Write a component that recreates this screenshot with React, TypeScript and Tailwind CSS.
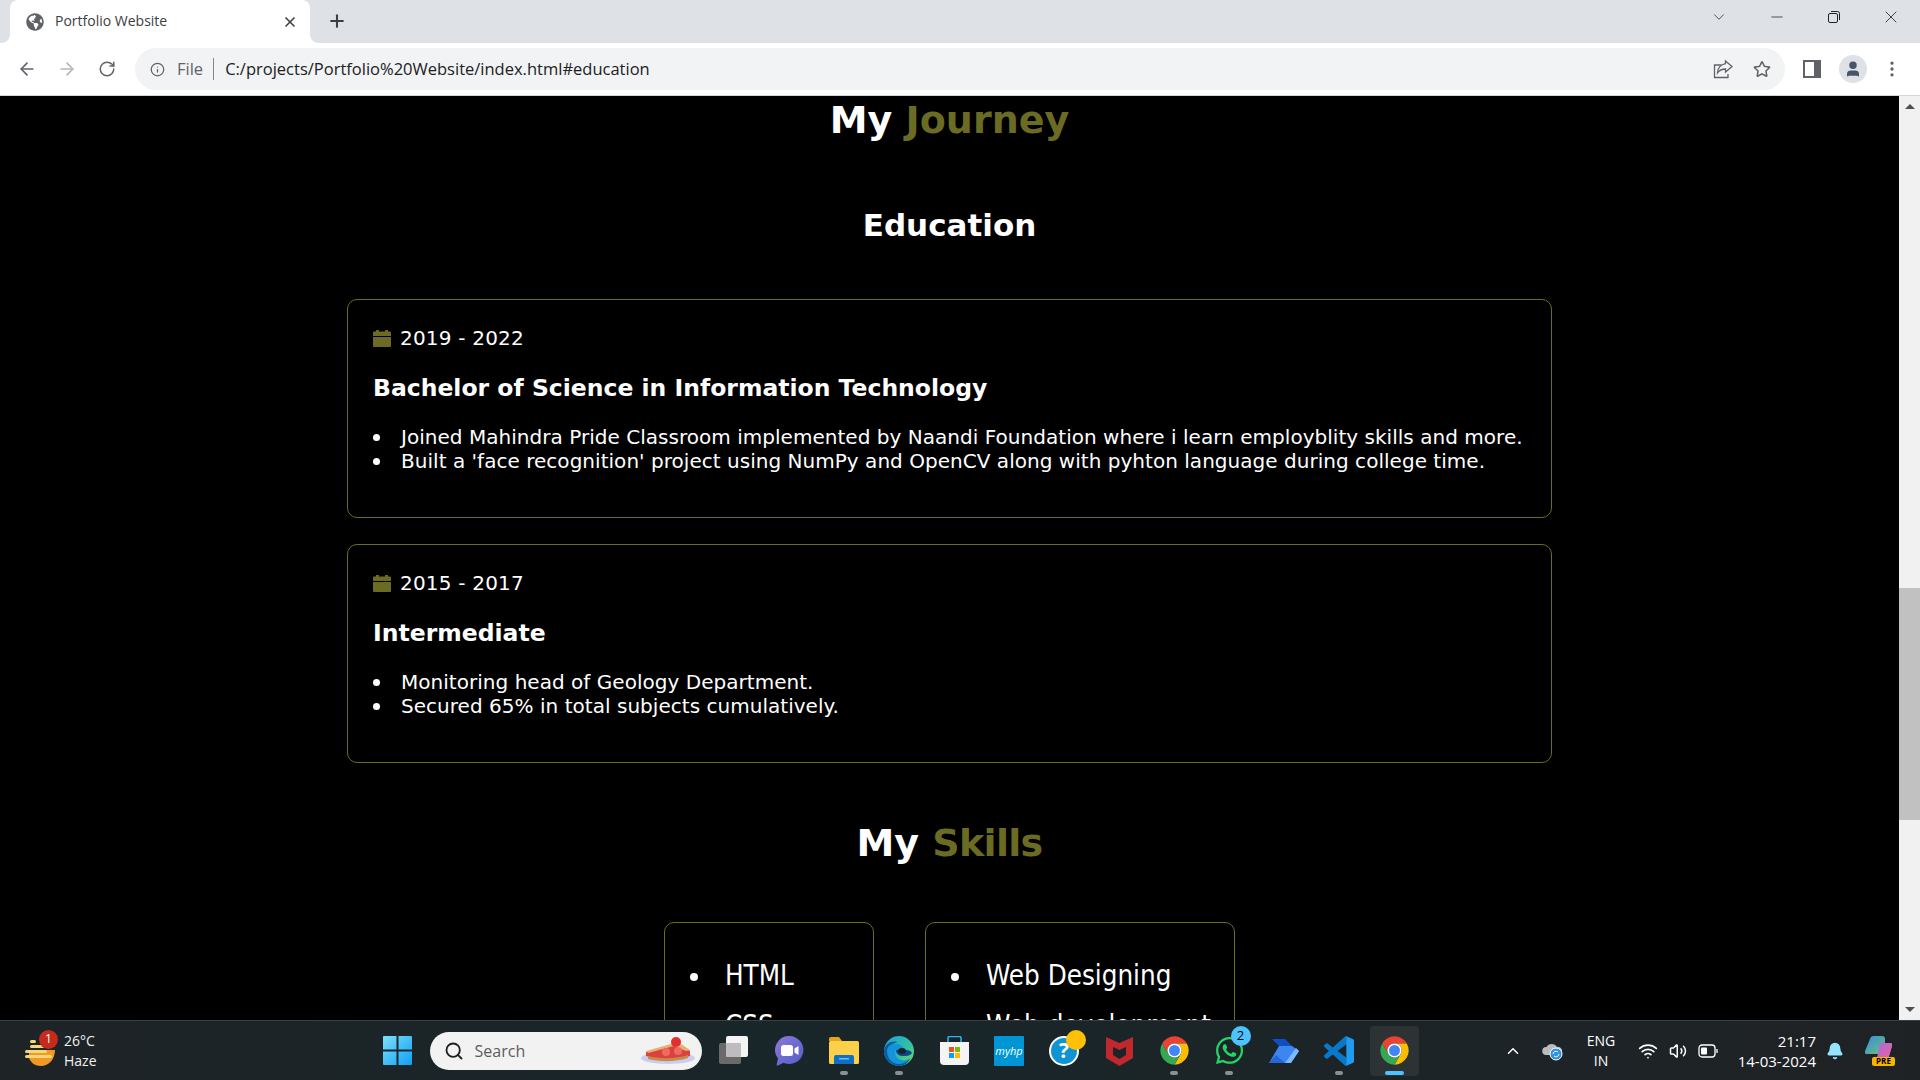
import { ReactNode } from 'react'
import { FaGlobeAmericas, FaWhatsapp, FaRegStar } from 'react-icons/fa'
import { Info, Search, ArrowLeft, ArrowRight, RotateCw, X, Plus, ChevronDown, ChevronUp, Minus, Wifi, Volume2, Bell, EllipsisVertical, User } from 'lucide-react'

const education = [
  {
    years: '2019 - 2022',
    title: 'Bachelor of Science in Information Technology',
    points: [
      'Joined Mahindra Pride Classroom implemented by Naandi Foundation where i learn employblity skills and more.',
      "Built a 'face recognition' project using NumPy and OpenCV along with pyhton language during college time.",
    ],
  },
  {
    years: '2015 - 2017',
    title: 'Intermediate',
    points: ['Monitoring head of Geology Department.', 'Secured 65% in total subjects cumulatively.'],
  },
]

function Chrome() {
  const fin = 'M4.950 13A22 22 0 0 1 43.050 13H24A11 11 0 0 0 14.470 29.500Z'
  return (
    <svg width="31" height="31" viewBox="0 0 48 48">
      <path d={fin} fill="#ea4335" />
      <path d={fin} fill="#fbbc04" transform="rotate(120 24 24)" />
      <path d={fin} fill="#34a853" transform="rotate(240 24 24)" />
      <circle cx="24" cy="24" r="11" fill="#fff" />
      <circle cx="24" cy="24" r="8.500" fill="#4285f4" />
    </svg>
  )
}

function TaskView() {
  return (
    <svg width="30" height="29" viewBox="0 0 30 29">
      <rect x="0" y="7" width="22" height="21" rx="2" fill="#6a6a6a" />
      <rect x="7" y="0" width="22" height="21" rx="2" fill="#f4f4f4" />
      <rect x="7" y="7" width="15" height="14" rx="1" fill="#bdbdbd" />
    </svg>
  )
}

function ChatIcon() {
  return (
    <svg width="29" height="30" viewBox="0 0 29 30">
      <defs>
        <linearGradient id="chat" x1="0" y1="0" x2="1" y2="1">
          <stop offset="0" stopColor="#8f78d8" />
          <stop offset="1" stopColor="#4f5fc8" />
        </linearGradient>
      </defs>
      <path d="M14.500 0a14 14 0 1 1-6 26.700L3 29.500c-1 .3-1.500-.3-1.300-1.200L3 22.500A14 14 0 0 1 14.500 0z" fill="url(#chat)" />
      <rect x="6" y="9" width="12" height="11" rx="2.500" fill="#fff" />
      <path d="M19.500 12.500l4-2.500v9l-4-2.500z" fill="#fff" />
    </svg>
  )
}

function FolderIcon() {
  return (
    <svg width="30" height="27" viewBox="0 0 30 27">
      <path d="M0 2a2 2 0 0 1 2-2h8l3 4h-13z" fill="#e3a51a" />
      <rect x="0" y="4" width="30" height="23" rx="1.500" fill="#fdd04a" />
      <path d="M5 20a2 2 0 0 1 2-2h16a2 2 0 0 1 2 2v7H5z" fill="#0f6fc6" />
      <rect x="10" y="21" width="10" height="1.500" fill="#6bbdf0" />
    </svg>
  )
}

function EdgeIcon() {
  return (
    <svg width="30" height="30" viewBox="0 0 30 30">
      <defs>
        <linearGradient id="edgeTop" x1="0" y1="0" x2="1" y2="1">
          <stop offset="0" stopColor="#1aa2d8" />
          <stop offset="0.6" stopColor="#35c1a0" />
          <stop offset="1" stopColor="#7fdc5c" />
        </linearGradient>
      </defs>
      <circle cx="15" cy="15" r="15" fill="url(#edgeTop)" />
      <path d="M0 15C1 7 8 4 14 6c-6 1-9 5-8 11 1 7 8 11 15 9 2-.5 4-2 6-4-3 5-7 8-12 8C7 30 0 23 0 15z" fill="#0c59a4" />
      <path d="M3 15C3 10 8 7 13 8c4 .8 7 3 7 6H12c-2 4 0 8 5 10 3 1 6 0 9-2-3 4-7 6-11 6C8 28 3 22 3 15z" fill="#1493d8" />
      <path d="M12 14h10c3 0 5 1 6 3-2 3-6 3-9 3-4 0-7-2-7-6z" fill="#0a4a8a" />
      <ellipse cx="18" cy="15" rx="4" ry="3" fill="#1c2326" />
    </svg>
  )
}

function StoreIcon() {
  return (
    <svg width="29" height="29" viewBox="0 0 29 29">
      <path d="M8 6V2a1.500 1.500 0 0 1 1.500-1.500h10A1.500 1.500 0 0 1 21 2v4" fill="none" stroke="#29b6f0" strokeWidth="1.500" />
      <path d="M0 6h29v19a4 4 0 0 1-4 4H4a4 4 0 0 1-4-4z" fill="#f4f4f4" />
      <rect x="9" y="11" width="5" height="5" fill="#f25022" />
      <rect x="15" y="11" width="5" height="5" fill="#7fba00" />
      <rect x="9" y="17" width="5" height="5" fill="#00a4ef" />
      <rect x="15" y="17" width="5" height="5" fill="#ffb900" />
    </svg>
  )
}

function HelpIcon() {
  return (
    <div className="relative h-[30px] w-[30px]">
      <div className="flex h-[30px] w-[30px] items-center justify-center rounded-full border-[2px] border-white bg-[#0f94d2] text-[21px] font-bold text-white">?</div>
      <div className="absolute right-[-7px] top-[-6px] h-[20px] w-[20px] rounded-full bg-[#ffc107]" />
    </div>
  )
}

function McAfeeIcon() {
  return (
    <svg width="27" height="31" viewBox="0 0 27 31">
      <path fillRule="evenodd" d="M0 2L13.500 8 27 2V23L13.500 31 0 23ZM7 12L13.500 15 20 12V20L13.500 24 7 20Z" fill="#c0282d" />
    </svg>
  )
}

function AutomateIcon() {
  return (
    <svg width="30" height="24" viewBox="0 0 30 24">
      <path d="M3 0h13l7 7H10z" fill="#0f4fc4" />
      <path d="M10 7h13l7 5-8 12H0z" fill="#3d85f0" />
      <path d="M16 24h6l8-12-3-3z" fill="#7ab8ff" />
      <path d="M0 24l7-8 9 8z" fill="#2467d8" />
    </svg>
  )
}

function VsCodeIcon() {
  return (
    <svg width="30" height="30" viewBox="0 0 100 100">
      <path
        fillRule="evenodd"
        fill="#0a78c8"
        d="M96.500 10.800L75.900.900a6.200 6.200 0 0 0-7.100 1.200L29.400 38 12.200 25a4.200 4.200 0 0 0-5.300.200L1.400 30.200a4.200 4.200 0 0 0 0 6.200L16.300 50 1.400 63.600a4.200 4.200 0 0 0 0 6.200l5.500 5a4.200 4.200 0 0 0 5.300.200L29.400 62l39.400 35.900a6.200 6.200 0 0 0 7.100 1.200l20.600-9.900a6.200 6.200 0 0 0 3.500-5.600V16.400a6.200 6.200 0 0 0-3.500-5.600zM75 72.700L45.100 50 75 27.300z"
      />
      <path d="M72 1l24.500 9.800a6 6 0 0 1 3.500 5.600v67.200a6 6 0 0 1-3.500 5.600L72 99c2 0 3-1 3-3V4c0-2-1-3-3-3z" fill="#1f9cf0" />
    </svg>
  )
}

function Slot({ children, dot, active }: { children: ReactNode; dot?: boolean; active?: boolean }) {
  return (
    <div className="relative flex h-[50px] w-[55px] items-center justify-center">
      {active && <div className="absolute inset-y-0 left-[3px] w-[49px] rounded bg-[#2d3235]" />}
      <div className="relative flex items-center justify-center">{children}</div>
      {dot && <span className="absolute bottom-[1px] h-[4px] w-[8px] rounded-full bg-[#8c8f8f]" />}
      {active && <span className="absolute bottom-[1px] h-[4px] w-[19px] rounded-full bg-[#4cc2ff]" />}
    </div>
  )
}

function BrowserChrome() {
  return (
    <div className="shrink-0 font-['Open_Sans',sans-serif]">
      <div className="flex h-[43px] items-end bg-[#dee1e6]">
        <div className="relative ml-[10px] flex h-[43px] w-[300px] items-center rounded-t-lg bg-white pl-[16px] pr-[12px]">
          <div className="absolute bottom-0 left-[-8px] h-[8px] w-[8px] bg-[radial-gradient(circle_at_0_0,#dee1e6_7.500px,#ffffff_8px)]" />
          <div className="absolute bottom-0 right-[-8px] h-[8px] w-[8px] bg-[radial-gradient(circle_at_100%_0,#dee1e6_7.500px,#ffffff_8px)]" />
          <FaGlobeAmericas className="text-[18px] text-[#5f6368]" />
          <span className="mb-[2px] ml-[11px] text-[14px] text-[#3c4043]">Portfolio Website</span>
          <X className="ml-auto text-[#3c4043]" size={16} strokeWidth={2.5} />
        </div>
        <Plus className="mb-[12px] ml-[17px] text-[#3c4043]" size={20} strokeWidth={2.5} />
        <div className="mb-[16px] ml-auto flex items-center text-[#202124]">
          <ChevronDown size={18} strokeWidth={1} />
          <Minus className="ml-[40px]" size={18} strokeWidth={1} />
          <svg className="ml-[41px]" width="14" height="14" viewBox="0 0 14 14" fill="none" stroke="currentColor">
            <rect x="1.500" y="3.500" width="9" height="9" rx="1.500" />
            <path d="M4 1.500h6.500a2 2 0 0 1 2 2V10" />
          </svg>
          <X className="ml-[40px] mr-[19px]" size={20} strokeWidth={1} />
        </div>
      </div>
      <div className="flex h-[53px] items-center border-b border-[#d4d5d7] bg-white">
        <ArrowLeft className="ml-[17px] text-[#5f6368]" size={20} />
        <ArrowRight className="ml-[20px] text-[#b4b6b9]" size={20} />
        <RotateCw className="ml-[21px] text-[#5f6368]" size={18} />
        <div className="ml-[19px] flex h-[42px] w-[1650px] items-center rounded-full bg-[#f1f3f4] pl-[15px] pr-[14px]">
          <Info className="text-[#5f6368]" size={15} />
          <span className="ml-[12px] text-[16.500px] text-[#5f6368]">File</span>
          <span className="ml-[10px] h-[22px] w-px bg-[#80868b]" />
          <span className="ml-[11px] text-[16.500px] text-[#202124]">C:/projects/Portfolio%20Website/index.html#education</span>
          <svg className="ml-auto text-[#5f6368]" width="20" height="20" viewBox="0 0 20 20" fill="none" stroke="currentColor" strokeWidth="1.300">
            <path d="M8 6H1.500v12.500H15V15" />
            <path d="M12.500 2l6.500 5.500-6.500 5.500V10C9 10 6.500 11 4.500 14c.3-5 3.500-8.500 8-9.300z" />
          </svg>
          <FaRegStar className="ml-[20px] text-[18px] text-[#5f6368]" />
        </div>
        <div className="ml-[18px] h-[18px] w-[18px] border-[2px] border-r-[7px] border-[#5f6368] bg-white" />
        <div className="ml-[18px] flex h-[28px] w-[28px] items-center justify-center rounded-full bg-[#dee1e6] text-[#475569]">
          <User size={18} fill="currentColor" />
        </div>
        <EllipsisVertical className="ml-[15px] text-[#5f6368]" size={20} />
      </div>
    </div>
  )
}

function Taskbar() {
  return (
    <div className="relative flex h-[60px] shrink-0 items-center border-t border-[#3a3f41] bg-[linear-gradient(90deg,#1e2326,#18262a_45%,#1c2427_70%,#1f2225)] font-['Open_Sans',sans-serif] text-white">
      <div className="relative ml-[25px] h-[30px] w-[30px]">
        <svg width="30" height="30" viewBox="0 0 30 30">
          <path d="M4 14h26c0 9-6 16-14 16-6 0-10-3-12-8z" fill="#f09a24" />
          <rect x="5" y="4" width="6" height="3" rx="1.500" fill="#f5d67a" />
          <rect x="5" y="9" width="14" height="3" rx="1.500" fill="#f5d67a" />
          <rect x="0" y="14" width="22" height="3" rx="1.500" fill="#f5d67a" />
          <rect x="0" y="19" width="27" height="3" rx="1.500" fill="#f5d67a" />
        </svg>
        <div className="absolute left-[14px] top-[-6px] flex h-[19px] w-[19px] items-center justify-center rounded-full bg-[#c42b1c] text-[12px]">1</div>
      </div>
      <div className="ml-[9px] text-[14px] leading-[20px] text-[#f0f0f0]">
        <div>26°C</div>
        <div>Haze</div>
      </div>
      <svg className="ml-[286px]" width="29" height="29" viewBox="0 0 29 29">
        <defs>
          <linearGradient id="win" x1="0" y1="0" x2="1" y2="1">
            <stop offset="0" stopColor="#7be0fb" />
            <stop offset="1" stopColor="#0f9ff5" />
          </linearGradient>
        </defs>
        <path d="M0 1a1 1 0 0 1 1-1h12.500v13.500H0zM15.500 0H28a1 1 0 0 1 1 1v12.500H15.500zM0 15.500h13.500V29H1a1 1 0 0 1-1-1zM15.500 15.500H29V28a1 1 0 0 1-1 1H15.500z" fill="url(#win)" />
      </svg>
      <div className="ml-[18px] flex h-[38px] w-[272px] items-center rounded-full bg-[#f2f2f2] pl-[14px] text-[#5c5c5c]">
        <Search className="text-[#1f1f1f]" size={20} strokeWidth={2.2} />
        <span className="ml-[11px] text-[16px]">Search</span>
        <svg className="ml-auto mr-[6px]" width="56" height="27" viewBox="0 0 56 27">
          <ellipse cx="28" cy="21" rx="27" ry="6" fill="#c9cdf0" />
          <path d="M6 15L38 6l12 8v5c-14 5-30 4-44 0z" fill="#d9423f" />
          <path d="M6 14L38 5l12 8-4 1L34 9 8 16z" fill="#e8b070" />
          <path d="M8 19c12 3 28 3 40-1v3c-12 4-28 4-40 1z" fill="#c98a4a" />
          <circle cx="26" cy="15" r="4" fill="#ef6a62" />
          <circle cx="38" cy="14" r="4" fill="#ef6a62" />
          <circle cx="36" cy="5" r="5" fill="#e0302c" />
        </svg>
      </div>
      <div className="ml-[5px] flex items-center">
        <Slot><TaskView /></Slot>
        <Slot><ChatIcon /></Slot>
        <Slot dot><FolderIcon /></Slot>
        <Slot dot><EdgeIcon /></Slot>
        <Slot><StoreIcon /></Slot>
        <Slot>
          <div className="flex h-[30px] w-[30px] items-center justify-center rounded-[1px] bg-[#0096d6] text-[11px] italic leading-none">myhp</div>
        </Slot>
        <Slot><HelpIcon /></Slot>
        <Slot><McAfeeIcon /></Slot>
        <Slot dot><Chrome /></Slot>
        <Slot dot>
          <FaWhatsapp className="text-[31px] text-[#25d366]" />
          <div className="absolute right-[-6px] top-[-9px] flex h-[20px] w-[20px] items-center justify-center rounded-full bg-[#4cc2ff] text-[13px] text-black">2</div>
        </Slot>
        <Slot><AutomateIcon /></Slot>
        <Slot dot><VsCodeIcon /></Slot>
        <Slot active><Chrome /></Slot>
      </div>
      <div className="ml-auto mr-[25px] flex items-center">
        <ChevronUp size={18} />
        <svg className="ml-[19px]" width="22" height="20" viewBox="0 0 22 20">
          <path d="M5 14a4 4 0 0 1 .500-8A6 6 0 0 1 16 6a4 4 0 0 1 2 8z" fill="#b9bcbd" />
          <circle cx="15" cy="13" r="6" fill="#2f8fe0" stroke="#fff" strokeWidth="1" />
          <path d="M12 13a3 3 0 0 1 5-2M18 13a3 3 0 0 1-5 2" stroke="#fff" fill="none" />
        </svg>
        <div className="ml-[23px] w-[30px] text-center text-[14px] leading-[20px]">ENG<br />IN</div>
        <Wifi className="ml-[22px]" size={20} />
        <Volume2 className="ml-[11px]" size={18} />
        <svg className="ml-[11px]" width="20" height="14" viewBox="0 0 20 14" fill="none" stroke="currentColor" strokeWidth="1.300">
          <rect x="1" y="1" width="16" height="12" rx="3" />
          <rect x="3" y="3.500" width="6" height="7" rx="1" fill="currentColor" stroke="none" />
          <path d="M19 5v4" />
        </svg>
        <div className="ml-[16px] w-[82px] whitespace-nowrap text-right text-[15px] leading-[20px]">21:17<br />14-03-2024</div>
        <Bell className="ml-[10px] text-[#93e5ff]" size={18} fill="currentColor" />
        <div className="relative ml-[21px] h-[30px] w-[30px]">
          <svg width="27" height="24" viewBox="0 0 27 24">
            <defs>
              <linearGradient id="copA" x1="0" y1="0" x2="1" y2="1">
                <stop offset="0" stopColor="#2c8fe8" />
                <stop offset="1" stopColor="#8ecb4a" />
              </linearGradient>
              <linearGradient id="copB" x1="0" y1="0" x2="1" y2="1">
                <stop offset="0" stopColor="#a86be0" />
                <stop offset="1" stopColor="#f0609a" />
              </linearGradient>
            </defs>
            <path d="M9 0h8a3 3 0 0 1 3 3v4h5a2 2 0 0 1 2 3l-3 10a4 4 0 0 1-4 3h-8l1-5H2a2 2 0 0 1-2-3L5 3a4 4 0 0 1 4-3z" fill="url(#copA)" />
            <path d="M15 7h10a2 2 0 0 1 2 3l-3 10a4 4 0 0 1-4 3h-8z" fill="url(#copB)" />
          </svg>
          <div className="absolute bottom-0 right-0 flex h-[9px] w-[23px] items-center justify-center rounded-[2px] bg-[#f7b500] text-[8px] font-bold text-black">PRE</div>
        </div>
      </div>
    </div>
  )
}

export default function App() {
  return (
    <div className="flex h-[1080px] w-[1920px] flex-col overflow-hidden bg-black">
      <BrowserChrome />
      <div className="flex min-h-0 flex-1">
        <main className="min-w-0 flex-1 overflow-hidden font-['DejaVu_Sans',sans-serif] text-white">
          <h2 className="text-center text-[38px] font-bold leading-[48px]">
            My <span className="text-[#6b6b23]">Journey</span>
          </h2>
          <h3 className="mt-[62px] text-center text-[31px] font-bold leading-[38px]">Education</h3>
          <div className="mx-auto mt-[55px] flex w-[1205px] flex-col gap-[26px]">
            {education.map((item) => (
              <section key={item.years} className="h-[219px] rounded-[10px] border border-[#6b6b23] pl-[25px] pr-[20px] pt-[25px]">
                <div className="flex items-center text-[20px] leading-[26px] tracking-[0.2px]">
                  <svg className="mr-[9px]" width="18" height="17" viewBox="0 0 18 17" fill="#6b6b23">
                    <rect x="3" y="0" width="3" height="3" />
                    <rect x="12" y="0" width="3" height="3" />
                    <path d="M1 1.500h16a1 1 0 0 1 1 1V6H0V2.500a1 1 0 0 1 1-1zM0 7h18v9a1 1 0 0 1-1 1H1a1 1 0 0 1-1-1z" />
                  </svg>
                  {item.years}
                </div>
                <h4 className="mt-[23px] text-[23.500px] font-bold leading-[28px]">{item.title}</h4>
                <ul className="mt-[23px] text-[20px] leading-[24px] tracking-[0.03px]">
                  {item.points.map((p) => (
                    <li key={p} className="flex items-center whitespace-nowrap">
                      <span className="mr-[21px] h-[7px] w-[7px] shrink-0 rounded-full bg-white" />
                      {p}
                    </li>
                  ))}
                </ul>
              </section>
            ))}
          </div>
          <h2 className="mt-[56px] text-center text-[38px] font-bold leading-[48px]">
            <span>My </span>
            <span className="tracking-[-0.7px] text-[#6b6b23]">Skills</span>
          </h2>
          <div className="mt-[55px] flex justify-center gap-[51px] text-[27.500px] leading-[50px] [font-stretch:condensed]">
            <ul className="h-[300px] w-[210px] rounded-[10px] border border-[#6b6b23] pl-[25px] pt-[27px]">
              {['HTML', 'CSS'].map((s) => (
                <li key={s} className="flex items-center">
                  <span className="mr-[27px] mt-[3px] h-[8px] w-[8px] shrink-0 rounded-full bg-white" />
                  {s}
                </li>
              ))}
            </ul>
            <ul className="h-[300px] w-[310px] rounded-[10px] border border-[#6b6b23] pl-[25px] pt-[27px]">
              {['Web Designing', 'Web development'].map((s) => (
                <li key={s} className="flex items-center whitespace-nowrap">
                  <span className="mr-[27px] mt-[3px] h-[8px] w-[8px] shrink-0 rounded-full bg-white" />
                  {s}
                </li>
              ))}
            </ul>
          </div>
        </main>
        <div className="flex w-[21px] shrink-0 flex-col bg-[#f1f1f1]">
          <div className="mx-auto mt-[8px] h-0 w-0 border-x-[5px] border-b-[5px] border-x-transparent border-b-[#505050]" />
          <div className="mt-[479px] h-[232px] w-full bg-[#c1c1c1]" />
          <div className="mx-auto mb-[8px] mt-auto h-0 w-0 border-x-[5px] border-t-[5px] border-x-transparent border-t-[#505050]" />
        </div>
      </div>
      <Taskbar />
    </div>
  )
}
